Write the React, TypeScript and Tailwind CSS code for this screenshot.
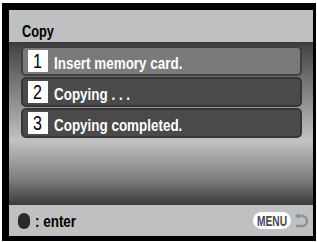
import React from 'react';

const font = { fontFamily: '"Liberation Sans", Arial, sans-serif' };

const steps = [
  { n: '1', label: 'Insert memory card.', active: true },
  { n: '2', label: 'Copying . . .', active: false },
  { n: '3', label: 'Copying completed.', active: false },
];

const StepRow = ({ n, label, active }: { n: string; label: string; active: boolean }) => (
  <div
    className={`h-[30px] rounded-[5px] border-2 flex items-center pl-[5px] gap-[6px] ${active ? 'bg-[#7a7a7a] border-[#3e3e3e]' : 'bg-[#4a4a4a] border-[#363636]'}`}
  >
    <div className="w-[20px] h-[22px] bg-white flex items-center justify-center">
      <span className="inline-block scale-x-[0.8] text-black text-[20px] leading-[20px]">{n}</span>
    </div>
    <span className="inline-block origin-left scale-x-[0.79] mt-[5px] text-white font-bold text-[17px] leading-none whitespace-nowrap">{label}</span>
  </div>
);

export default function App() {
  return (
    <div className="w-[317px] h-[242px] bg-white pt-[3px] pl-[2px] pr-[1px] pb-[1px]" style={font}>
      <div className="w-full h-full bg-black pt-[7px] pl-[7px] pr-[3px] pb-[5px]">
        <div className="w-full h-full flex flex-col">
          {/* Header */}
          <div className="h-[32px] bg-[#bfc0c2] flex items-end pl-[13px] pb-[2px] shrink-0">
            <span className="inline-block origin-left scale-x-[0.75] text-black font-bold text-[17px] leading-none">Copy</span>
          </div>

          {/* Step list */}
          <div className="flex-1 bg-[linear-gradient(to_bottom,#444444_0%,#8e8e8e_35%,#c2c2c2_60%,#7a7a7a_85%,#3a3a3a_100%)] border-t-[3px] border-[#3c3c3c] pl-[12px] pr-[11px] pt-[1px] flex flex-col gap-[1px]">
            {steps.map(s => (
              <StepRow key={s.n} {...s} />
            ))}
          </div>

          {/* Footer */}
          <div className="h-[31px] bg-[#bfc0c2] flex items-center justify-between pl-[9px] pr-[4px] shrink-0">
            <div className="flex items-center gap-[5px]">
              <div className="w-[12px] h-[16px] rounded-full bg-[#2a2a2a]" />
              <span className="inline-block origin-left scale-x-[0.79] mt-[2px] text-black font-bold text-[17px] leading-none">: enter</span>
            </div>
            <div className="flex items-center gap-[3px]">
              <div className="w-[38px] h-[17px] rounded-full bg-white flex items-center justify-center">
                <span className="inline-block scale-x-[0.68] text-[#4a4a4a] font-bold text-[15px] leading-none">MENU</span>
              </div>
              <svg width="15" height="16" viewBox="0 0 15 16">
                <path d="M3 3 H8 A5 5 0 0 1 8 13 H2" fill="none" stroke="#8f8f8f" strokeWidth="2.4" />
                <path d="M1 3 L5 0 L5 6 Z" fill="#8f8f8f" />
              </svg>
            </div>
          </div>
        </div>
      </div>
    </div>
  );
}
